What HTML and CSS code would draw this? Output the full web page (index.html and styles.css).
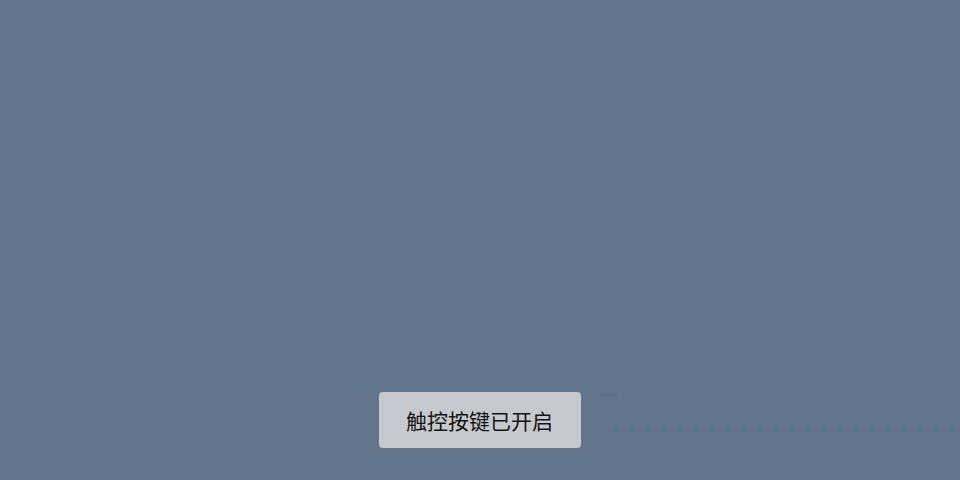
FILE: index.html
```html
<!DOCTYPE html>
<html lang="zh-CN">

<head>
    <meta charset="UTF-8">
    <meta name="viewport" content="width=device-width, initial-scale=1.0">
    <title>触控按键</title>
    <link rel="stylesheet" href="styles.css">
</head>

<body>
    <div class="screen">
        <div class="trail">
            <span class="trail-mark"></span>
            <span class="trail-dots"></span>
        </div>
        <div class="toast">触控按键已开启</div>
    </div>
</body>

</html>
```

FILE: styles.css
```css
body {
    margin: 0;
    height: 100vh;
    overflow: hidden;
    background-color: #63758d;
    font-family: "Noto Sans CJK SC", "Noto Sans", sans-serif;
}

.screen {
    position: relative;
    height: 100%;
    display: flex;
    flex-direction: column;
    justify-content: flex-end;
    align-items: center;
}

.toast {
    width: 202px;
    height: 56px;
    margin-bottom: 32px;
    margin-right: 1px;
    display: flex;
    align-items: center;
    justify-content: center;
    background-color: #c6c9cd;
    border-radius: 4px;
    color: #141414;
    font-size: 21px;
}

/* faint dotted trace to the right of the toast */
.trail {
    position: absolute;
    left: 600px;
    right: 0;
    top: 392px;
    height: 50px;
}

.trail-mark {
    position: absolute;
    left: 1px;
    top: 1px;
    width: 16px;
    height: 4px;
    background-color: #5a7290;
}

.trail-dots {
    position: absolute;
    left: 4px;
    right: 0;
    top: 34px;
    height: 7px;
    background-image: radial-gradient(circle, #557490 3px, transparent 3.5px);
    background-size: 16px 7px;
    background-repeat: repeat-x;
    background-position: 4px 0;
}
```
